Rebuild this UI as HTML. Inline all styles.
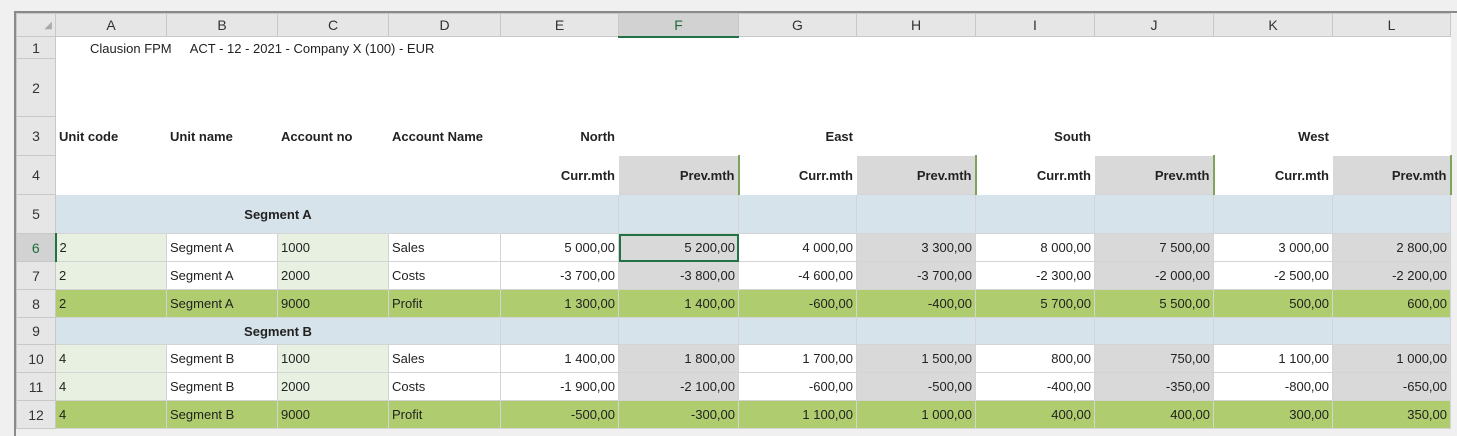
<!DOCTYPE html>
<html><head><meta charset="utf-8"><style>
html,body{margin:0;padding:0;width:1457px;height:434px;overflow:hidden;background:#f0f0f0;font-family:"Liberation Sans",Arial,sans-serif;}
#frame{position:absolute;left:14px;top:11px;width:1443px;height:423px;background:#f0f0f0;border-left:2px solid #8a8a8a;border-top:2px solid #8a8a8a;}
table{position:absolute;left:16px;top:13px;border-collapse:collapse;table-layout:fixed;font-size:13px;color:#222;}
td{border:1px solid #d4d4d4;padding:0 3px;white-space:nowrap;overflow:visible;background:#fff;}
td.h{background:#e6e6e6;text-align:center;font-size:14px;color:#333;border-color:#c8c8c8;}
td.rn{background:#e6e6e6;text-align:center;font-size:14px;color:#333;border-color:#c8c8c8;}
td.sel{background:#d2d2d2;color:#1e6b3c;border-bottom:2px solid #217346;}
td.rsel{background:#d2d2d2;color:#1e6b3c;border-right:2px solid #217346;}
.b{font-weight:bold;}
.r{text-align:right;}
.g{background:#d9d9d9;}
.lg{background:#e8f1e1;}
.p{background:#afcd6f;}
.s{background:#d6e3ea;}
.w{border-color:#fff;}
</style></head><body>
<div id="frame"></div>
<table>
<colgroup><col style="width:39px"><col style="width:111px"><col style="width:111px"><col style="width:111px"><col style="width:112px"><col style="width:118px"><col style="width:120px"><col style="width:118px"><col style="width:119px"><col style="width:119px"><col style="width:119px"><col style="width:119px"><col style="width:118px"></colgroup>
<tr style="height:23px"><td class="h" style="color:#aaa;text-align:right;font-size:10px">◢</td><td class="h">A</td><td class="h">B</td><td class="h">C</td><td class="h">D</td><td class="h">E</td><td class="h sel">F</td><td class="h">G</td><td class="h">H</td><td class="h">I</td><td class="h">J</td><td class="h">K</td><td class="h">L</td></tr>
<tr style="height:22px"><td class="rn">1</td><td colspan="12" class="w" style="padding-left:34px;vertical-align:top;padding-top:3px">Clausion FPM&nbsp;&nbsp;&nbsp;&nbsp;&nbsp;ACT - 12 - 2021 - Company X (100) - EUR</td></tr>
<tr style="height:58px"><td class="rn">2</td><td colspan="12" class="w"></td></tr>
<tr style="height:39px" class="b"><td class="rn" style="font-weight:normal">3</td><td class="w">Unit code</td><td class="w">Unit name</td><td class="w">Account no</td><td class="w">Account Name</td><td class="w r">North</td><td class="w"></td><td class="w r">East</td><td class="w"></td><td class="w r">South</td><td class="w"></td><td class="w r">West</td><td class="w"></td></tr>
<tr style="height:39px" class="b"><td class="rn" style="font-weight:normal">4</td><td class="w"></td><td class="w"></td><td class="w"></td><td class="w"></td><td class="w r">Curr.mth</td><td class="g r" style="border-right:2px solid #7fa35a">Prev.mth</td><td class="w r">Curr.mth</td><td class="g r" style="border-right:2px solid #7fa35a">Prev.mth</td><td class="w r">Curr.mth</td><td class="g r" style="border-right:2px solid #7fa35a">Prev.mth</td><td class="w r">Curr.mth</td><td class="g r" style="border-right:2px solid #7fa35a">Prev.mth</td></tr>
<tr style="height:39px"><td class="rn">5</td><td class="s b" colspan="4" style="text-align:center;border-right-color:#d6e3ea">Segment A</td><td class="s"></td><td class="s"></td><td class="s"></td><td class="s"></td><td class="s"></td><td class="s"></td><td class="s"></td><td class="s"></td></tr>
<tr style="height:28px"><td class="rn rsel">6</td><td class="lg">2</td><td>Segment A</td><td class="lg">1000</td><td>Sales</td><td class="r">5 000,00</td><td class="g r" style="outline:2px solid #217346;outline-offset:-2px">5 200,00</td><td class="r">4 000,00</td><td class="g r">3 300,00</td><td class="r">8 000,00</td><td class="g r">7 500,00</td><td class="r">3 000,00</td><td class="g r">2 800,00</td></tr>
<tr style="height:28px"><td class="rn">7</td><td class="lg">2</td><td>Segment A</td><td class="lg">2000</td><td>Costs</td><td class="r">-3 700,00</td><td class="g r">-3 800,00</td><td class="r">-4 600,00</td><td class="g r">-3 700,00</td><td class="r">-2 300,00</td><td class="g r">-2 000,00</td><td class="r">-2 500,00</td><td class="g r">-2 200,00</td></tr>
<tr style="height:28px"><td class="rn">8</td><td class="p">2</td><td class="p">Segment A</td><td class="p">9000</td><td class="p">Profit</td><td class="p r">1 300,00</td><td class="p r">1 400,00</td><td class="p r">-600,00</td><td class="p r">-400,00</td><td class="p r">5 700,00</td><td class="p r">5 500,00</td><td class="p r">500,00</td><td class="p r">600,00</td></tr>
<tr style="height:27px"><td class="rn">9</td><td class="s b" colspan="4" style="text-align:center">Segment B</td><td class="s"></td><td class="s"></td><td class="s"></td><td class="s"></td><td class="s"></td><td class="s"></td><td class="s"></td><td class="s"></td></tr>
<tr style="height:28px"><td class="rn">10</td><td class="lg">4</td><td>Segment B</td><td class="lg">1000</td><td>Sales</td><td class="r">1 400,00</td><td class="g r">1 800,00</td><td class="r">1 700,00</td><td class="g r">1 500,00</td><td class="r">800,00</td><td class="g r">750,00</td><td class="r">1 100,00</td><td class="g r">1 000,00</td></tr>
<tr style="height:28px"><td class="rn">11</td><td class="lg">4</td><td>Segment B</td><td class="lg">2000</td><td>Costs</td><td class="r">-1 900,00</td><td class="g r">-2 100,00</td><td class="r">-600,00</td><td class="g r">-500,00</td><td class="r">-400,00</td><td class="g r">-350,00</td><td class="r">-800,00</td><td class="g r">-650,00</td></tr>
<tr style="height:28px"><td class="rn">12</td><td class="p">4</td><td class="p">Segment B</td><td class="p">9000</td><td class="p">Profit</td><td class="p r">-500,00</td><td class="p r">-300,00</td><td class="p r">1 100,00</td><td class="p r">1 000,00</td><td class="p r">400,00</td><td class="p r">400,00</td><td class="p r">300,00</td><td class="p r">350,00</td></tr>
</table>
</body></html>
